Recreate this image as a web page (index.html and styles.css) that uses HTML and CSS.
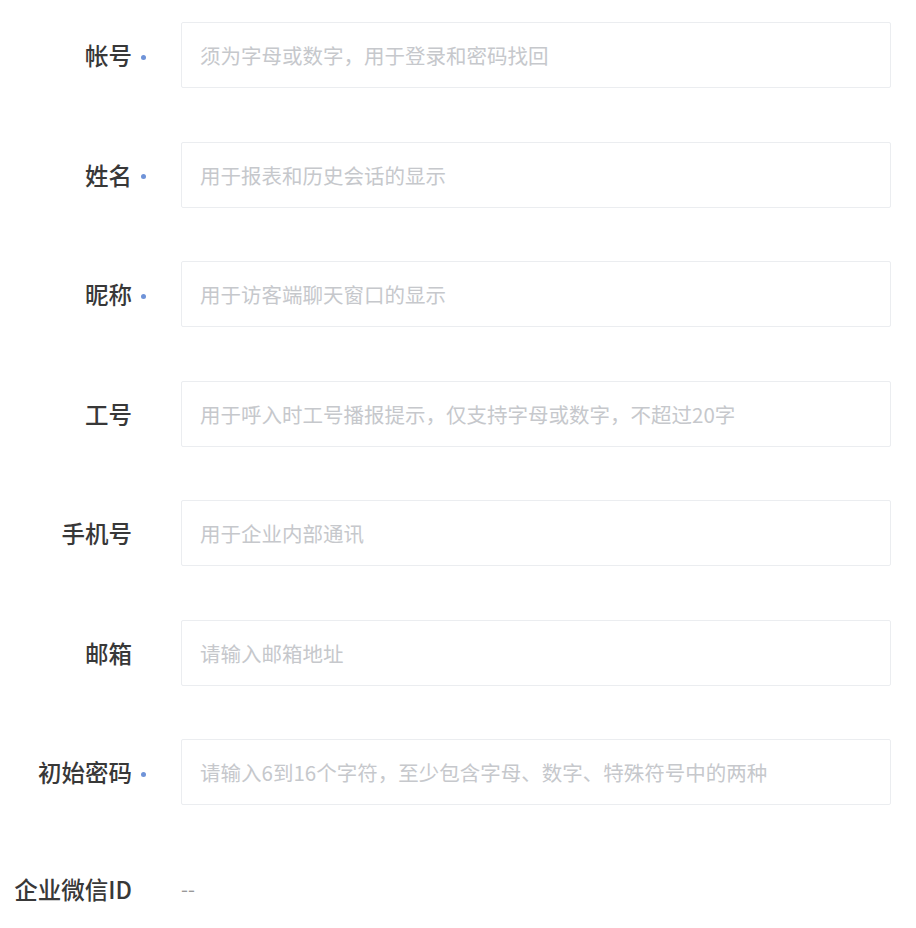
FILE: index.html
```html
<!DOCTYPE html>
<html lang="zh-CN">
<head>
  <meta charset="UTF-8" />
  <meta name="viewport" content="width=device-width, initial-scale=1.0"/>
  <title>新增坐席</title>
  <link rel="stylesheet" href="styles.css">
</head>
<body>
  <form class="agent-form">
    <div class="field required">
      <label class="field-label">帐号</label>
      <span class="field-mark"></span>
      <input class="field-input" type="text" placeholder="须为字母或数字，用于登录和密码找回" />
    </div>
    <div class="field required">
      <label class="field-label">姓名</label>
      <span class="field-mark"></span>
      <input class="field-input" type="text" placeholder="用于报表和历史会话的显示" />
    </div>
    <div class="field required">
      <label class="field-label">昵称</label>
      <span class="field-mark"></span>
      <input class="field-input" type="text" placeholder="用于访客端聊天窗口的显示" />
    </div>
    <div class="field">
      <label class="field-label">工号</label>
      <span class="field-mark"></span>
      <input class="field-input" type="text" placeholder="用于呼入时工号播报提示，仅支持字母或数字，不超过20字" />
    </div>
    <div class="field">
      <label class="field-label">手机号</label>
      <span class="field-mark"></span>
      <input class="field-input" type="text" placeholder="用于企业内部通讯" />
    </div>
    <div class="field">
      <label class="field-label">邮箱</label>
      <span class="field-mark"></span>
      <input class="field-input" type="text" placeholder="请输入邮箱地址" />
    </div>
    <div class="field required">
      <label class="field-label">初始密码</label>
      <span class="field-mark"></span>
      <input class="field-input" type="password" placeholder="请输入6到16个字符，至少包含字母、数字、特殊符号中的两种" />
    </div>
    <div class="field field-static">
      <label class="field-label">企业微信ID</label>
      <span class="field-mark"></span>
      <span class="field-value">--</span>
    </div>
  </form>
</body>
</html>
```

FILE: styles.css
```css
:root {
  --texto: #333333;
  --placeholder: #c6c8cc;
  --borda: #ebedf0;
  --azul: #6f93d8;
}

* {
  margin: 0;
  padding: 0;
  box-sizing: border-box;
}

body {
  background-color: #ffffff;
  color: var(--texto);
  font-family: "Noto Sans CJK SC", "Noto Sans", sans-serif;
}

.agent-form {
  display: flex;
  flex-direction: column;
  gap: 53.5px;
  padding-top: 22px;
}

.field {
  display: flex;
  align-items: center;
  height: 66px;
}

.field-static {
  height: 60px;
}

.field-label {
  width: 132px;
  flex: none;
  text-align: right;
  font-size: 23.5px;
  font-weight: 500;
  color: #383838;
  white-space: nowrap;
}

.field-mark {
  width: 49px;
  flex: none;
  display: flex;
  align-items: center;
}

/* bolinha azul dos campos obrigatórios */
.field.required .field-mark::before {
  content: "";
  width: 5px;
  height: 5px;
  margin-left: 9px;
  margin-top: 4px;
  border-radius: 50%;
  background-color: var(--azul);
}

.field-input {
  width: 710px;
  height: 66px;
  padding: 0 18px;
  border: 1px solid var(--borda);
  border-radius: 2px;
  font-family: inherit;
  font-size: 20.5px;
  color: var(--texto);
  outline: none;
}

.field-input::placeholder {
  color: var(--placeholder);
}

.field-value {
  font-size: 20px;
  color: #999999;
}
```
